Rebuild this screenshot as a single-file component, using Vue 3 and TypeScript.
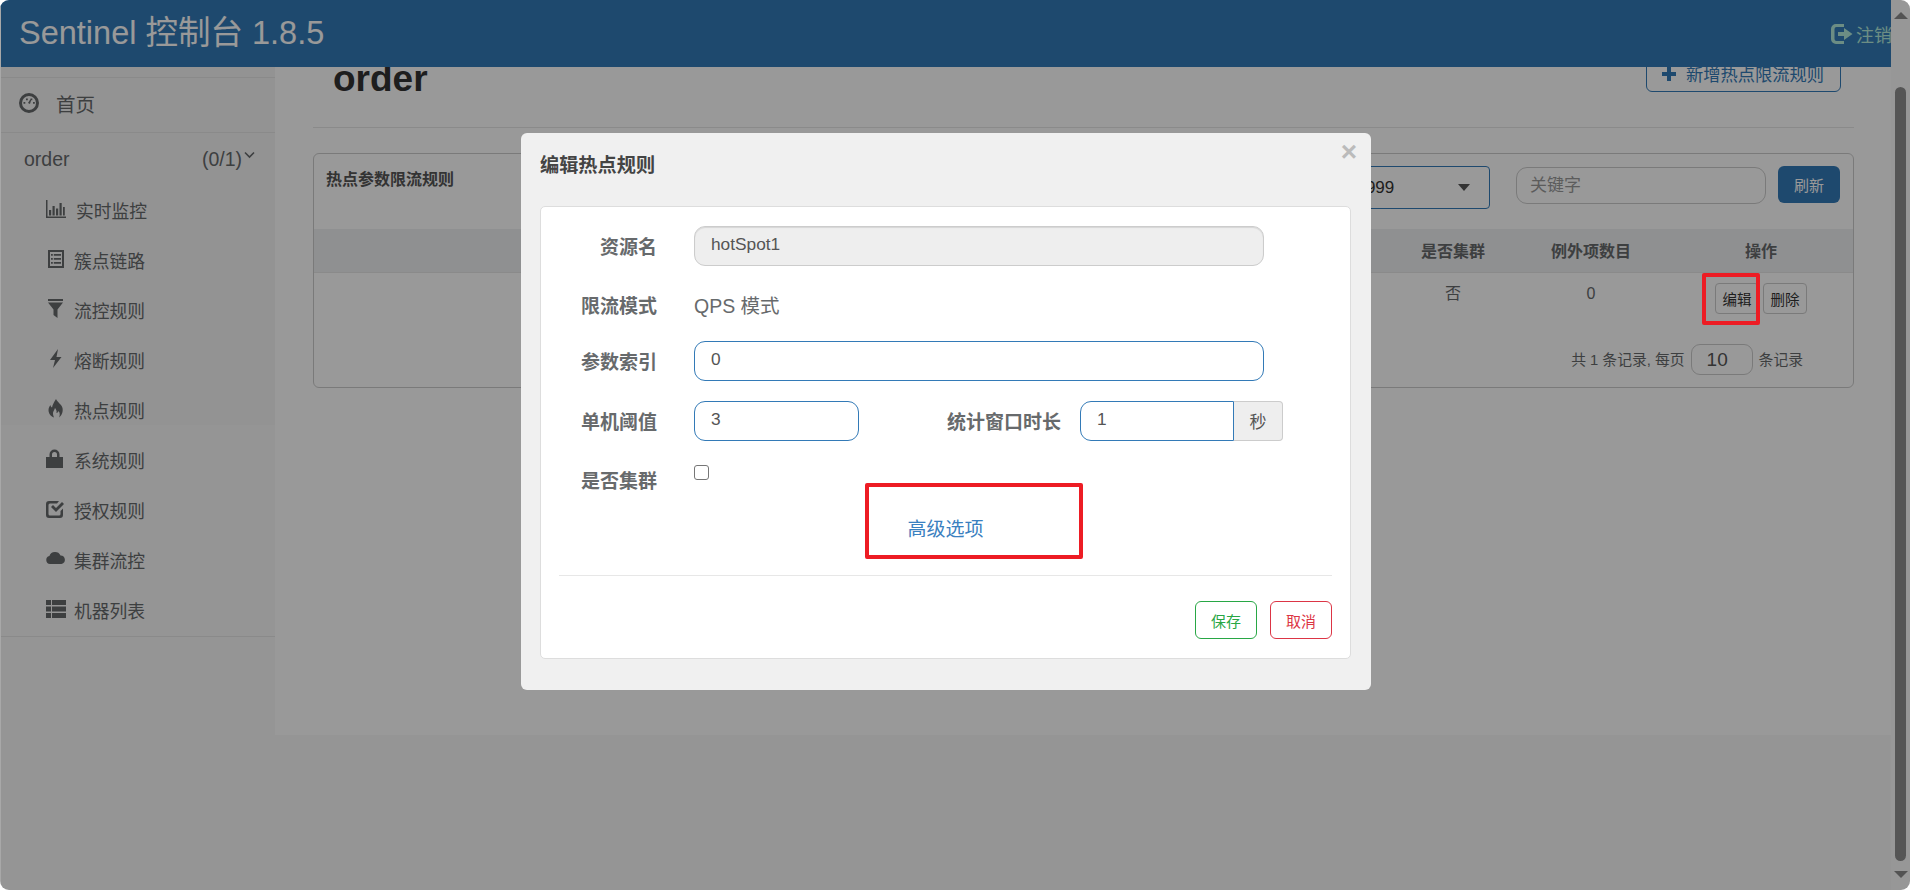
<script setup lang="ts">
interface MenuItem {
  label: string;
  d: string;
  wide?: boolean;
}

// sidebar entries, icons drawn on a 20x20 box
const menu: MenuItem[] = [
  {
    label: "实时监控",
    wide: true,
    d: "M0 1h1.500v16.500H20V19H0z M3 11h2.200v5.500H3z M6.500 7h2.200v9.500H6.500z M10 9.500h2.200v7H10z M13.500 4h2.200v12.500h-2.200z M17 8h1.800v8.500H17z",
  },
  {
    label: "簇点链路",
    d: "M2 1h16v18H2z M4 3v14h12V3z M5 5h1.800v1.800H5z M7.800 5H15v1.800H7.800z M5 9h1.800v1.800H5z M7.800 9H15v1.800H7.800z M5 13h1.800v1.800H5z M7.800 13H15v1.800H7.800z",
  },
  {
    label: "流控规则",
    d: "M2 0h15v2H2z M2 3.500h15l-5.500 7V19l-4-3v-5.500z",
  },
  { label: "熔断规则", d: "M12 0 4 11h5l-2 8 8.500-11H10.500z" },
  {
    label: "热点规则",
    d: "M10 0c1 3 5.500 5 6.500 9 .7 3-.2 7-3.500 9.500 1-2 1.200-4.500-.5-6.500-.5 1.500-1.500 2-2 2 .5-2-.5-4-1.500-5-.5 2-2.500 4-2 6 .2 1 .5 2.500 1 3.500-3.500-1-5.500-4.500-5.500-7.500 0-2 1-4 2-5 0 1 .5 2 1.500 2.500C6.500 6 8 3 10 0z",
  },
  {
    label: "系统规则",
    d: "M3.500 8V5.500a5 5 0 0 1 10 0V8H17v11H0V8z M6 8h5V5.500a2.500 2.500 0 0 0-5 0z",
  },
  {
    label: "授权规则",
    d: "M3 2h10l-2 2.500H4A1.500 1.500 0 0 0 2.500 6v9A1.500 1.500 0 0 0 4 16.500h9a1.500 1.500 0 0 0 1.500-1.500v-3L17 9.500V16a3 3 0 0 1-3 3H3a3 3 0 0 1-3-3V5a3 3 0 0 1 3-3z M5 8l2-2 3 3 6-6 2 2-8 8z",
  },
  {
    label: "集群流控",
    d: "M4 15a4 4 0 0 1-.6-7.900A6 6 0 0 1 14.500 6.500 4.300 4.300 0 0 1 15.500 15z",
  },
  {
    label: "机器列表",
    d: "M0 1h5v5H0z M6 1h14v5H6z M0 7.500h5v5H0z M6 7.500h14v5H6z M0 14h5v5H0z M6 14h14v5H6z",
  },
];
</script>

<template>
  <div class="window">
    <div class="page">
      <header class="navbar">
        <span class="brand">Sentinel 控制台 1.8.5</span>
        <a class="logout">
          <svg class="logout-icon" width="22" height="22" viewBox="0 0 22 22">
            <path
              fill-rule="evenodd"
              d="M5 1h8v3H5.500A2 2 0 0 0 3.500 6v10a2 2 0 0 0 2 2H13v3H5a5 5 0 0 1-5-5V6a5 5 0 0 1 5-5z M13 5l8.500 6-8.500 6v-4H7V9h6z"
            />
          </svg>
          注销
        </a>
      </header>

      <div class="body">
        <aside class="sidebar">
          <a class="home">
            <svg class="gauge" width="20" height="20" viewBox="0 0 20 20">
              <circle cx="10" cy="10" r="8.500" fill="none" stroke="currentColor" stroke-width="3" />
              <path d="M4.500 9h1.800v1.800H4.500z M7 5.500h1.800v1.800H7z M11.500 5.500h1.800v1.800h-1.800z M14 9h1.800v1.800H14z M9 10l2.200-3.500 1 .5L11 11z" />
            </svg>
            首页
          </a>
          <div class="app-row">
            <span>order</span>
            <span class="app-count">
              (0/1)
              <svg class="chevron" width="11" height="8" viewBox="0 0 11 8">
                <path d="M1 1.500l4.500 4.500 4.500-4.500" fill="none" stroke="currentColor" stroke-width="1.600" />
              </svg>
            </span>
          </div>
          <nav class="menu">
            <a v-for="item in menu" :key="item.label" class="menu-item">
              <svg class="menu-icon" width="20" height="20" viewBox="0 0 20 20">
                <path fill-rule="evenodd" :d="item.d" />
              </svg>
              <span :class="{ 'menu-wide': item.wide }">{{ item.label }}</span>
            </a>
          </nav>
        </aside>

        <main class="wrapper">
          <div class="page-head">
            <h1>order</h1>
            <button class="btn-add">
              <svg width="14" height="14" viewBox="0 0 14 14"><path d="M5 0h4v5h5v4H9v5H5V9H0V5h5z" /></svg>
              新增热点限流规则
            </button>
          </div>

          <section class="panel">
            <div class="panel-head">
              <h3>热点参数限流规则</h3>
              <div class="select">
                <span>192.168.1.104:8999</span>
                <i class="caret"></i>
              </div>
              <input class="search" placeholder="关键字" />
              <button class="btn-refresh">刷新</button>
            </div>

            <div class="grid grid-head">
              <span></span>
              <span>是否集群</span>
              <span>例外项数目</span>
              <span>操作</span>
            </div>
            <div class="grid grid-row">
              <span></span>
              <span>否</span>
              <span>0</span>
              <span class="actions">
                <button>编辑</button>
                <button>删除</button>
              </span>
            </div>

            <div class="pager">
              <span>共 1 条记录, 每页</span>
              <input value="10" />
              <span>条记录</span>
            </div>
          </section>
        </main>
      </div>
    </div>

    <div class="scrollbar">
      <i class="arrow-up"></i>
      <i class="thumb"></i>
      <i class="arrow-down"></i>
    </div>

    <div class="backdrop"></div>

    <div class="dialog">
      <span class="close">×</span>
      <h4>编辑热点规则</h4>
      <div class="card">
        <div class="row">
          <label>资源名</label>
          <input class="control disabled" value="hotSpot1" disabled />
        </div>
        <div class="row row-mode">
          <label>限流模式</label>
          <span class="static">QPS 模式</span>
        </div>
        <div class="row">
          <label>参数索引</label>
          <input class="control" value="0" />
        </div>
        <div class="row">
          <label>单机阈值</label>
          <input class="control short" value="3" />
          <label class="label-window">统计窗口时长</label>
          <div class="group">
            <input class="control" value="1" />
            <span class="addon">秒</span>
          </div>
        </div>
        <div class="row row-check">
          <label>是否集群</label>
          <input class="check" type="checkbox" />
        </div>
        <a class="advanced">高级选项</a>
        <hr />
        <div class="footer">
          <button class="save">保存</button>
          <button class="cancel">取消</button>
        </div>
      </div>
    </div>

    <!-- red annotation boxes drawn over the screenshot -->
    <div class="mark mark-edit"></div>
    <div class="mark mark-advanced"></div>
  </div>
</template>

<style>
body {
  background: #fff;
  overflow: hidden;
}
</style>

<style scoped>
.window {
  position: relative;
  display: flex;
  width: 1910px;
  height: 890px;
  overflow: hidden;
  border-radius: 9px;
  background: #f8f8f8;
  color: #676a6c;
  font-family: "Liberation Sans", "Noto Sans CJK SC", sans-serif;
}

svg {
  fill: currentColor;
  flex: none;
}

input,
button {
  font-family: inherit;
  outline: none;
}

.page {
  display: flex;
  flex: 1;
  flex-direction: column;
  min-width: 0;
}

.navbar {
  display: flex;
  flex: none;
  align-items: center;
  justify-content: space-between;
  height: 67px;
  padding-left: 19px;
  background: #337ab7;
  overflow: hidden;
}

.brand {
  color: #fff;
  font-size: 32.500px;
  margin-top: -8px;
}

.logout {
  display: flex;
  align-items: center;
  gap: 3px;
  margin-right: -1px;
  color: #b5ecdd;
  font-size: 18px;
  white-space: nowrap;
}

.logout-icon {
  margin-top: 1px;
}

.body {
  display: flex;
  flex: 1;
  min-height: 0;
}

.sidebar {
  flex: none;
  width: 275px;
  padding-top: 10px;
  background: linear-gradient(#f5f5f5 358px, #f8f8f8 358px);
}

.home {
  display: flex;
  align-items: center;
  gap: 17px;
  height: 56px;
  padding-left: 19px;
  padding-bottom: 4px;
  border-top: 1px solid #e7e7e7;
  border-bottom: 1px solid #e7e7e7;
  box-sizing: border-box;
  font-size: 19.500px;
}

.app-row {
  display: flex;
  align-items: center;
  justify-content: space-between;
  height: 52px;
  padding: 0 20px 0 24px;
  font-size: 19.500px;
}

.app-count {
  display: flex;
  align-items: center;
}

.chevron {
  margin: -8px 0 0 2px;
}

.menu {
  display: flex;
  flex-direction: column;
  padding-bottom: 1px;
  border-bottom: 1px solid #e7e7e7;
}

.menu-item {
  display: flex;
  align-items: center;
  gap: 8px;
  height: 50px;
  padding-left: 46px;
  padding-bottom: 1px;
  box-sizing: border-box;
  font-size: 17.800px;
}

.menu-icon {
  margin-top: -2px;
}

.menu-wide {
  margin-left: 2px;
}

.wrapper {
  flex: 1;
  height: 668px;
  min-width: 0;
  padding: 0 37px 0 38px;
  overflow: hidden;
  background: #fff;
}

/* the page is scrolled, so the head starts above the navbar edge */
.page-head {
  display: flex;
  align-items: flex-start;
  justify-content: space-between;
  height: 81px;
  margin-top: -20px;
  padding: 8px 13px 0 20px;
  border-bottom: 1px solid #e7e7e7;
  box-sizing: border-box;
}

h1 {
  margin: 4px 0 0;
  color: #333;
  font-size: 37px;
  line-height: 40px;
}

.btn-add {
  display: flex;
  align-items: center;
  gap: 10px;
  width: 195px;
  height: 37px;
  padding: 0 0 0 15px;
  border: 1px solid #337ab7;
  border-radius: 6px;
  background: #fff;
  color: #337ab7;
  font-size: 17.250px;
}

.panel {
  margin-top: 25px;
  border: 1px solid #ccc;
  border-radius: 6px;
  height: 235px;
  box-sizing: border-box;
}

.panel-head {
  display: flex;
  align-items: flex-start;
  height: 75px;
  padding: 12px 13px 0 12px;
  box-sizing: border-box;
}

h3 {
  flex: 1;
  margin: 3px 0 0;
  color: #555;
  font-size: 16px;
  line-height: 22px;
}

.select {
  display: flex;
  align-items: center;
  justify-content: space-between;
  width: 300px;
  height: 43px;
  padding: 0 19px 0 52px;
  border: 1px solid #337ab7;
  border-radius: 4px;
  box-sizing: border-box;
  color: #333;
  font-size: 17px;
}

.caret {
  border-top: 7px solid #555;
  border-left: 6.500px solid transparent;
  border-right: 6.500px solid transparent;
}

.search {
  width: 250px;
  height: 37px;
  margin: 1px 0 0 26px;
  padding: 0 13px;
  border: 1px solid #ccc;
  border-radius: 11px;
  box-sizing: border-box;
  font-size: 17px;
}

.search::placeholder {
  color: #999;
}

.btn-refresh {
  width: 62px;
  height: 37px;
  margin-left: 12px;
  padding: 0;
  border: 0;
  border-radius: 6px;
  background: #337ab7;
  color: #fff;
  font-size: 15px;
}

.grid {
  display: grid;
  grid-template-columns: 1fr 120px 156px 184px;
  text-align: center;
}

.grid-head {
  align-items: center;
  height: 44px;
  padding-bottom: 1px;
  border-bottom: 1px solid #e7e7e7;
  box-sizing: border-box;
  background: #eff0f2;
  color: #676a6c;
  font-size: 16px;
  font-weight: 700;
}

.grid-row {
  padding-top: 9px;
  height: 71px;
  box-sizing: border-box;
  font-size: 16px;
  line-height: 24px;
}

.actions {
  display: flex;
  justify-content: center;
  gap: 4px;
  padding-top: 1px;
}

.actions button {
  width: 44px;
  height: 31px;
  padding: 0;
  border: 1px solid #ccc;
  border-radius: 4px;
  background: #fff;
  color: #333;
  font-size: 14.500px;
}

.pager {
  display: flex;
  align-items: center;
  justify-content: flex-end;
  gap: 6px;
  padding-right: 50px;
  font-size: 14.800px;
}

.pager span {
  margin-top: -3px;
}

.pager input {
  width: 62px;
  height: 31px;
  padding: 0 0 0 15px;
  border: 1px solid #ccc;
  border-radius: 9px;
  box-sizing: border-box;
  color: #555;
  font-size: 19px;
}

.scrollbar {
  display: flex;
  flex: none;
  flex-direction: column;
  align-items: center;
  width: 19px;
  background: #fcfcfc;
}

.arrow-up,
.arrow-down {
  border-left: 7px solid transparent;
  border-right: 7px solid transparent;
}

.arrow-up {
  margin-top: 12px;
  border-bottom: 7px solid #8a8a8a;
}

.arrow-down {
  margin-top: 10px;
  border-top: 7px solid #8a8a8a;
}

.thumb {
  width: 11px;
  height: 774px;
  margin-top: 68px;
  border-radius: 6px;
  background: #8e8e8e;
}

.backdrop {
  position: absolute;
  inset: 0;
  border-left: 1px solid #a8a8a8;
  background: rgba(0, 0, 0, 0.4);
  background-clip: padding-box;
}

.dialog {
  position: absolute;
  top: 133px;
  left: 521px;
  width: 850px;
  height: 557px;
  padding: 0 20px 0 19px;
  border-radius: 6px;
  box-sizing: border-box;
  background: #f0f0f0;
}

.close {
  position: absolute;
  top: 0;
  right: 14px;
  color: #bbb;
  font-size: 28px;
  font-weight: 700;
  line-height: 38px;
}

h4 {
  height: 73px;
  margin: 0;
  padding-top: 21px;
  box-sizing: border-box;
  color: #444;
  font-size: 19.200px;
  line-height: 24px;
}

.card {
  height: 453px;
  padding-top: 19px;
  border: 1px solid #ddd;
  border-radius: 5px;
  box-sizing: border-box;
  background: #fff;
}

.row {
  display: flex;
  align-items: center;
  height: 40px;
  margin-bottom: 20px;
}

.row label {
  flex: none;
  width: 116px;
  margin-right: 37px;
  padding-bottom: 1px;
  color: #676a6c;
  font-size: 19px;
  font-weight: 700;
  text-align: right;
}

.row-mode {
  margin-bottom: 15px;
}

.row-mode label {
  margin-top: -3px;
}

.row-check {
  margin-bottom: 0;
}

.row-check label {
  margin-top: -3px;
}

.row .label-window {
  width: 202px;
  margin-right: 19px;
}

.control {
  width: 570px;
  height: 40px;
  padding: 0 16px 3px;
  border: 1px solid #337ab7;
  border-radius: 11px;
  box-sizing: border-box;
  color: #555;
  font-size: 17.300px;
}

.disabled {
  border-color: #ccc;
  background: #eee;
  box-shadow: inset 0 1px 1px rgba(0, 0, 0, 0.1);
}

.short {
  width: 165px;
}

.static {
  font-size: 19.500px;
  margin-top: -3px;
}

.group {
  display: flex;
}

.group .control {
  width: 154px;
  border-radius: 11px 0 0 11px;
}

.addon {
  display: flex;
  align-items: center;
  justify-content: center;
  width: 49px;
  padding-bottom: 2px;
  border: 1px solid #ccc;
  border-left: 0;
  border-radius: 0 4px 4px 0;
  box-sizing: border-box;
  background: #eee;
  color: #555;
  font-size: 17px;
}

.check {
  width: 15px;
  height: 15px;
  margin: -18px 0 0;
  border: 1px solid #767676;
  border-radius: 3px;
  appearance: none;
  background: #fff;
}

.advanced {
  display: flex;
  align-items: center;
  justify-content: center;
  height: 52px;
  padding-bottom: 4px;
  color: #3a80c0;
  font-size: 19px;
}

hr {
  height: 1px;
  margin: 18px 18px 25px;
  border: 0;
  background: #e7e7e7;
}

.footer {
  display: flex;
  justify-content: flex-end;
  gap: 13px;
  padding-right: 18px;
}

.footer button {
  width: 62px;
  height: 38px;
  padding: 0;
  border: 1px solid;
  border-radius: 6px;
  background: #fff;
  font-size: 15px;
}

.save {
  color: #28a745;
}

.cancel {
  color: #dc3545;
}

.mark {
  position: absolute;
  border: 4px solid #ed1c24;
  border-radius: 2px;
  box-sizing: border-box;
}

.mark-edit {
  top: 273px;
  left: 1702px;
  width: 58px;
  height: 52px;
}

.mark-advanced {
  top: 483px;
  left: 865px;
  width: 218px;
  height: 76px;
}
</style>
